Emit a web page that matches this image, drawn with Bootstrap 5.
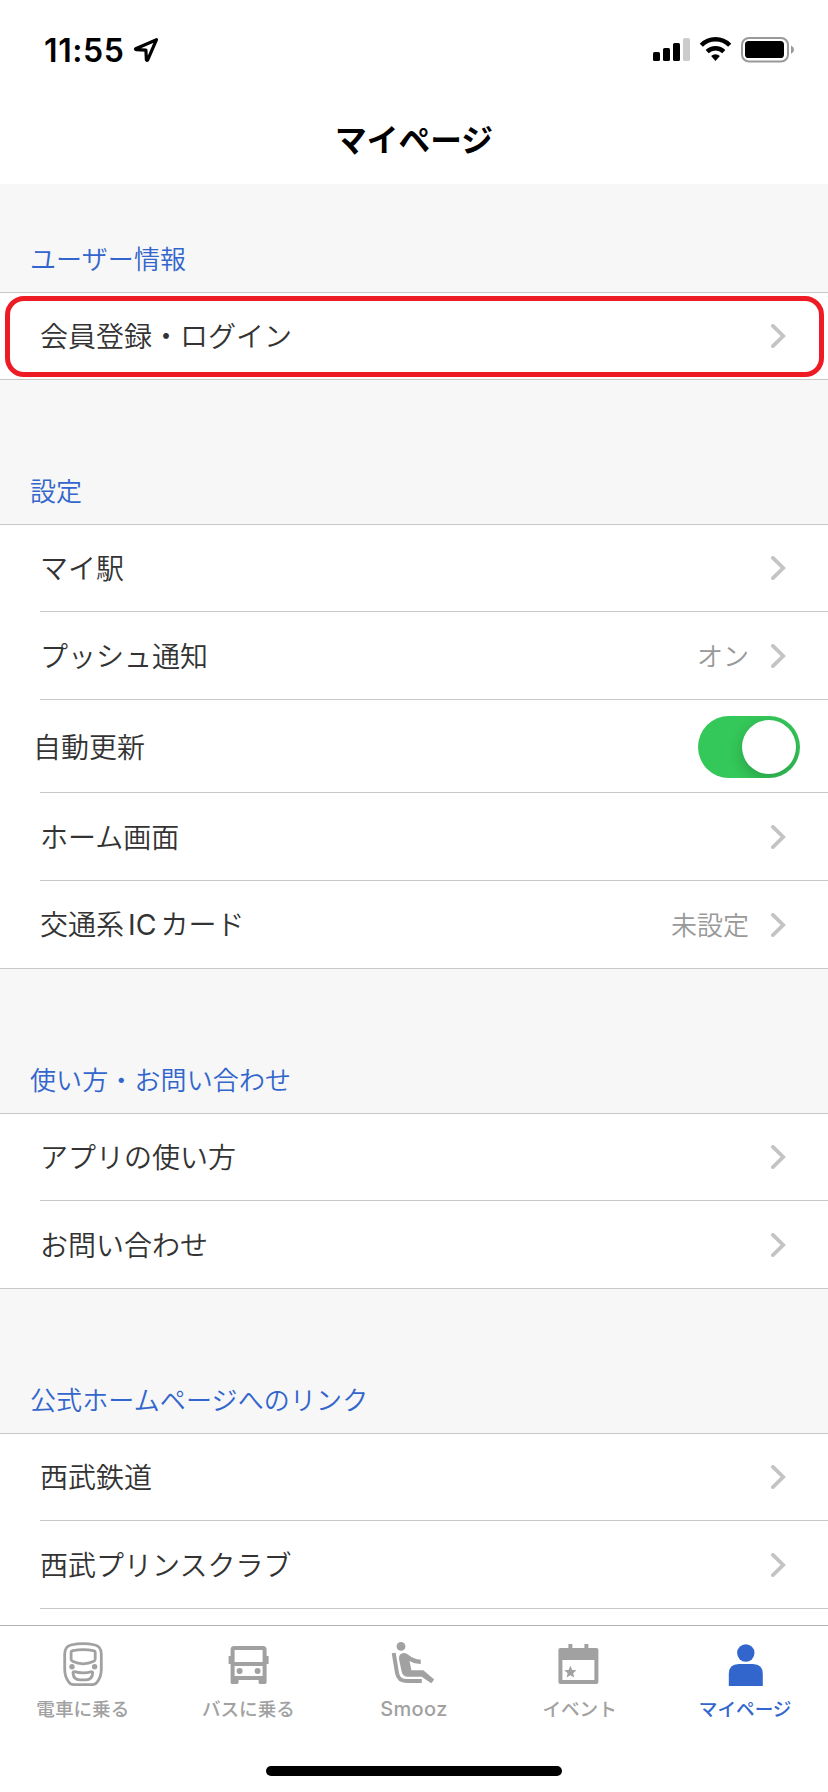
<!DOCTYPE html>
<html lang="ja">
<head>
<meta charset="utf-8">
<meta name="viewport" content="width=device-width, initial-scale=1">
<title>マイページ</title>
<link rel="stylesheet" href="https://cdn.jsdelivr.net/npm/bootstrap@5.3.0/dist/css/bootstrap.min.css">
<style>
  :root { --line: #c8c8c8; --accent: #36c; --muted: #a1a1a1; }
  body { font-family: Inter, "Noto Sans CJK JP", sans-serif; color: #333; background: #fff; }
  .screen { height: 1792px; }
  .status-bar { height: 88px; padding: 12px 33px 0 44px; color: #000; }
  .clock { font-size: 32px; font-weight: 600; line-height: 1; letter-spacing: .6px; padding-top: 1px; }
  .page-title { height: 96px; padding-top: 9px; font-size: 31.7px; font-weight: 700; color: #000; line-height: 1; }
  .content { background: #f7f7f7; }
  .section-head { height: 144px; padding: 0 0 19px 30px; font-size: 26px; font-weight: 350; line-height: 1; letter-spacing: .12px; color: var(--accent); }
  .section-head.first { height: 108px; }
  .rows { background: #fff; border-top: 1px solid var(--line); border-bottom: 1px solid var(--line); }
  .item { height: 88px; margin-left: 40px; padding-right: 42px; border-bottom: 1px solid var(--line); font-size: 28px; font-weight: 350; line-height: 1; }
  .item:first-child { height: 87px; }
  .item:last-child { height: 87px; border-bottom: 0; }
  .item.single { height: 86px; border-bottom: 0; }
  .item.switch-row { height: 93px; padding: 2px 28px 0 0; }
  .item-name, .item-value { padding-top: 2px; }
  .switch-row .item-name { margin-left: -7px; }
  .item-value { font-size: 26px; color: #999; margin-right: 22px; }
  .latin { font-size: 28.5px; font-weight: 400; margin: 0 4px 0 4px; }
  .toggle { width: 102px; height: 62px; padding: 4px; background: #34c759; }
  .knob { width: 54px; height: 54px; background: #fff; box-shadow: 0 5px 14px rgba(0,0,0,.2); }
  .highlight { left: 5px; right: 4px; top: 3px; height: 81px; border: 5px solid #ed1c24; border-radius: 19px; }
  .tab-bar { height: 167px; border-top: 1px solid #b2b2b2; background: #fff; color: var(--muted); }
  .tab-item { padding-top: 14px; font-size: 18.6px; font-weight: 500; line-height: 1; }
  .tab-item span { margin-top: 11px; height: 20px; line-height: 20px; }
  .tab-item .latin-label { font-size: 20px; font-weight: 500; letter-spacing: .4px; }
  .tab-item.active { color: var(--accent); }
  .home-bar { width: 296px; height: 10px; background: #000; margin-bottom: 16px; }
</style>
</head>
<body>
<svg class="d-none" xmlns="http://www.w3.org/2000/svg">
  <symbol id="chev" viewBox="0 0 15 24"><path d="M1.9 1.9 L12.2 12 L1.9 22.1" fill="none" stroke="#c4c4c6" stroke-width="3.8" stroke-linecap="round" stroke-linejoin="miter"/></symbol>
</svg>
<div class="screen d-flex flex-column overflow-hidden">
  <header>
    <div class="status-bar d-flex align-items-center justify-content-between">
      <div class="d-flex align-items-center">
        <span class="clock">11:55</span>
        <svg class="ms-2" width="26" height="26" viewBox="0 0 26 26"><path d="M23.5 2.7 L2.7 11.7 Q2 12.3 3.3 12.6 L12.9 13.1 L13.4 22.8 Q14 24 14.7 22.9 Z" fill="none" stroke="#000" stroke-width="3.2" stroke-linejoin="round"/></svg>
      </div>
      <div class="d-flex align-items-center">
        <svg width="38" height="26" viewBox="0 0 38 26"><rect x="0" y="15" width="7" height="9" rx="1.6"/><rect x="10" y="11" width="7" height="13" rx="1.6"/><rect x="20" y="6" width="7" height="18" rx="1.6"/><rect x="30" y="1" width="7" height="23" rx="1.6" fill="#ccc"/></svg>
        <svg class="ms-2" width="34" height="26" viewBox="0 0 34 26"><g fill="none" stroke="#000" stroke-width="4.4"><path d="M2.3 8.3 A19.8 19.8 0 0 1 30.7 8.3"/><path d="M8.2 14.6 A11.8 11.8 0 0 1 24.8 14.6"/></g><path d="M12.1 19 A6.4 6.4 0 0 1 20.9 19 L16.5 24 Z"/></svg>
        <svg class="ms-2" width="54" height="26" viewBox="0 0 54 26"><rect x="1" y="1" width="46" height="23.5" rx="7" fill="none" stroke="#999" stroke-width="2"/><rect x="4" y="4" width="39" height="17" rx="3.6"/><path d="M50 8.6 Q53 10 53 12.8 Q53 15.6 50 17 Z" fill="#999"/></svg>
      </div>
    </div>
    <h1 class="page-title d-flex align-items-center justify-content-center m-0">マイページ</h1>
  </header>

  <main class="content flex-fill overflow-hidden">
    <h2 class="section-head first d-flex align-items-end m-0">ユーザー情報</h2>
    <div class="rows position-relative">
      <div class="item single d-flex align-items-center"><span class="item-name me-auto">会員登録・ログイン</span><svg width="15" height="24"><use href="#chev"/></svg></div>
      <div class="highlight position-absolute"></div>
    </div>

    <h2 class="section-head d-flex align-items-end m-0">設定</h2>
    <div class="rows">
      <div class="item d-flex align-items-center"><span class="item-name me-auto">マイ駅</span><svg width="15" height="24"><use href="#chev"/></svg></div>
      <div class="item d-flex align-items-center"><span class="item-name me-auto">プッシュ通知</span><span class="item-value">オン</span><svg width="15" height="24"><use href="#chev"/></svg></div>
      <div class="item switch-row d-flex align-items-center"><span class="item-name me-auto">自動更新</span><div class="toggle rounded-pill d-flex justify-content-end overflow-hidden"><div class="knob rounded-circle"></div></div></div>
      <div class="item d-flex align-items-center"><span class="item-name me-auto">ホーム画面</span><svg width="15" height="24"><use href="#chev"/></svg></div>
      <div class="item d-flex align-items-center"><span class="item-name me-auto">交通系<span class="latin">IC</span>カード</span><span class="item-value">未設定</span><svg width="15" height="24"><use href="#chev"/></svg></div>
    </div>

    <h2 class="section-head d-flex align-items-end m-0">使い方・お問い合わせ</h2>
    <div class="rows">
      <div class="item d-flex align-items-center"><span class="item-name me-auto">アプリの使い方</span><svg width="15" height="24"><use href="#chev"/></svg></div>
      <div class="item d-flex align-items-center"><span class="item-name me-auto">お問い合わせ</span><svg width="15" height="24"><use href="#chev"/></svg></div>
    </div>

    <h2 class="section-head d-flex align-items-end m-0">公式ホームページへのリンク</h2>
    <div class="rows">
      <div class="item d-flex align-items-center"><span class="item-name me-auto">西武鉄道</span><svg width="15" height="24"><use href="#chev"/></svg></div>
      <div class="item d-flex align-items-center"><span class="item-name me-auto">西武プリンスクラブ</span><svg width="15" height="24"><use href="#chev"/></svg></div>
      <div class="item"></div>
    </div>
  </main>

  <footer class="tab-bar d-flex flex-column flex-shrink-0 align-items-center justify-content-between">
    <nav class="row g-0 w-100">
      <div class="tab-item col d-flex flex-column align-items-center">
        <svg width="48" height="48" viewBox="0 0 48 48" fill="none" stroke="currentColor" stroke-width="2.8"><path d="M5.7 14 Q5.7 6.6 12 5 Q24 2.4 36 5 Q42.3 6.6 42.3 14 V29 Q42.3 37 38 42.3 Q36.5 44.6 33.5 44.6 H14.5 Q11.5 44.6 10 42.3 Q5.7 37 5.7 29 Z"/><path d="M12.1 12.5 Q12.1 10.9 13.8 10.6 Q24 8.6 34.4 10.6 Q36.2 10.9 36.2 12.5 V19 Q36.2 20.6 34.8 21.3 Q24 26.3 13.5 21.3 Q12.1 20.6 12.1 19 Z"/><path d="M14 32.9 Q14.1 31.7 15.6 31.7 Q19 32.8 24 32.8 Q29 32.8 32.2 31.7 Q33.7 31.7 33.7 33.2 Q33.2 39.9 27 39.9 H21 Q14.4 39.9 14 32.9 Z"/><g fill="currentColor" stroke="none"><circle cx="13" cy="26.7" r="2.7"/><circle cx="35.6" cy="26.7" r="2.7"/></g></svg>
        <span>電車に乗る</span>
      </div>
      <div class="tab-item col d-flex flex-column align-items-center">
        <svg width="48" height="48" viewBox="0 0 48 48" fill="currentColor"><path fill-rule="evenodd" d="M10 6 H39 Q42.6 6 42.6 9.6 V16 H44.6 V24 H42.6 V42.6 Q42.6 44 41.2 44 H36 Q34.6 44 34.6 42.6 V40 H14.6 V42.6 Q14.6 44 13.2 44 H8 Q6.6 44 6.6 42.6 V24 H4.6 V16 H6.6 V9.6 Q6.6 6 10 6 Z M10.6 10 V22 H38.6 V10 Z M10.6 26 V36 H38.6 V26 Z"/><circle cx="15.6" cy="31" r="3"/><circle cx="33.6" cy="31" r="3"/></svg>
        <span>バスに乗る</span>
      </div>
      <div class="tab-item col d-flex flex-column align-items-center">
        <svg width="48" height="48" viewBox="0 0 48 48" fill="currentColor"><circle cx="11" cy="6.4" r="4.4"/><path d="M3.7 13 L7 33 Q8.5 41 16.5 41 H31.8" fill="none" stroke="currentColor" stroke-width="4"/><path d="M9 19 Q8.6 13 14 13 Q16.3 13 18.3 14.7 Q24.5 19.8 30.7 19.5 V24 Q25 24.3 19.5 20.9 L21.4 30.3 H33.3 L44.2 39.5 L41.3 43.2 L31.6 36.7 H18 Q12.8 36.7 11.7 31.7 Z"/></svg>
        <span class="latin-label">Smooz</span>
      </div>
      <div class="tab-item col d-flex flex-column align-items-center">
        <svg width="48" height="48" viewBox="0 0 48 48" fill="currentColor"><path fill-rule="evenodd" d="M4.4 8 H12.4 V4 H16.4 V8 H28.4 V4 H32.4 V8 H40.4 Q42.4 8 42.4 10 V42 Q42.4 44 40.4 44 H4.4 Q2.4 44 2.4 42 V10 Q2.4 8 4.4 8 Z M6.4 20 V40 H38.4 V20 Z"/><path d="M14.4 25.8 L16.2 29.9 L20.5 30.3 L17.2 33.2 L18.2 37.6 L14.4 35.3 L10.6 37.6 L11.6 33.2 L8.3 30.3 L12.6 29.9 Z"/></svg>
        <span>イベント</span>
      </div>
      <div class="tab-item active col d-flex flex-column align-items-center">
        <svg width="48" height="48" viewBox="0 0 48 48" fill="currentColor"><circle cx="24.8" cy="13" r="8.7"/><path d="M7.8 46 V34 Q7.8 24 17.8 24 H31.8 Q41.8 24 41.8 34 V46 Z"/></svg>
        <span>マイページ</span>
      </div>
    </nav>
    <div class="home-bar rounded-pill"></div>
  </footer>
</div>
<script src="https://cdn.jsdelivr.net/npm/bootstrap@5.3.0/dist/js/bootstrap.bundle.min.js"></script>
</body>
</html>
